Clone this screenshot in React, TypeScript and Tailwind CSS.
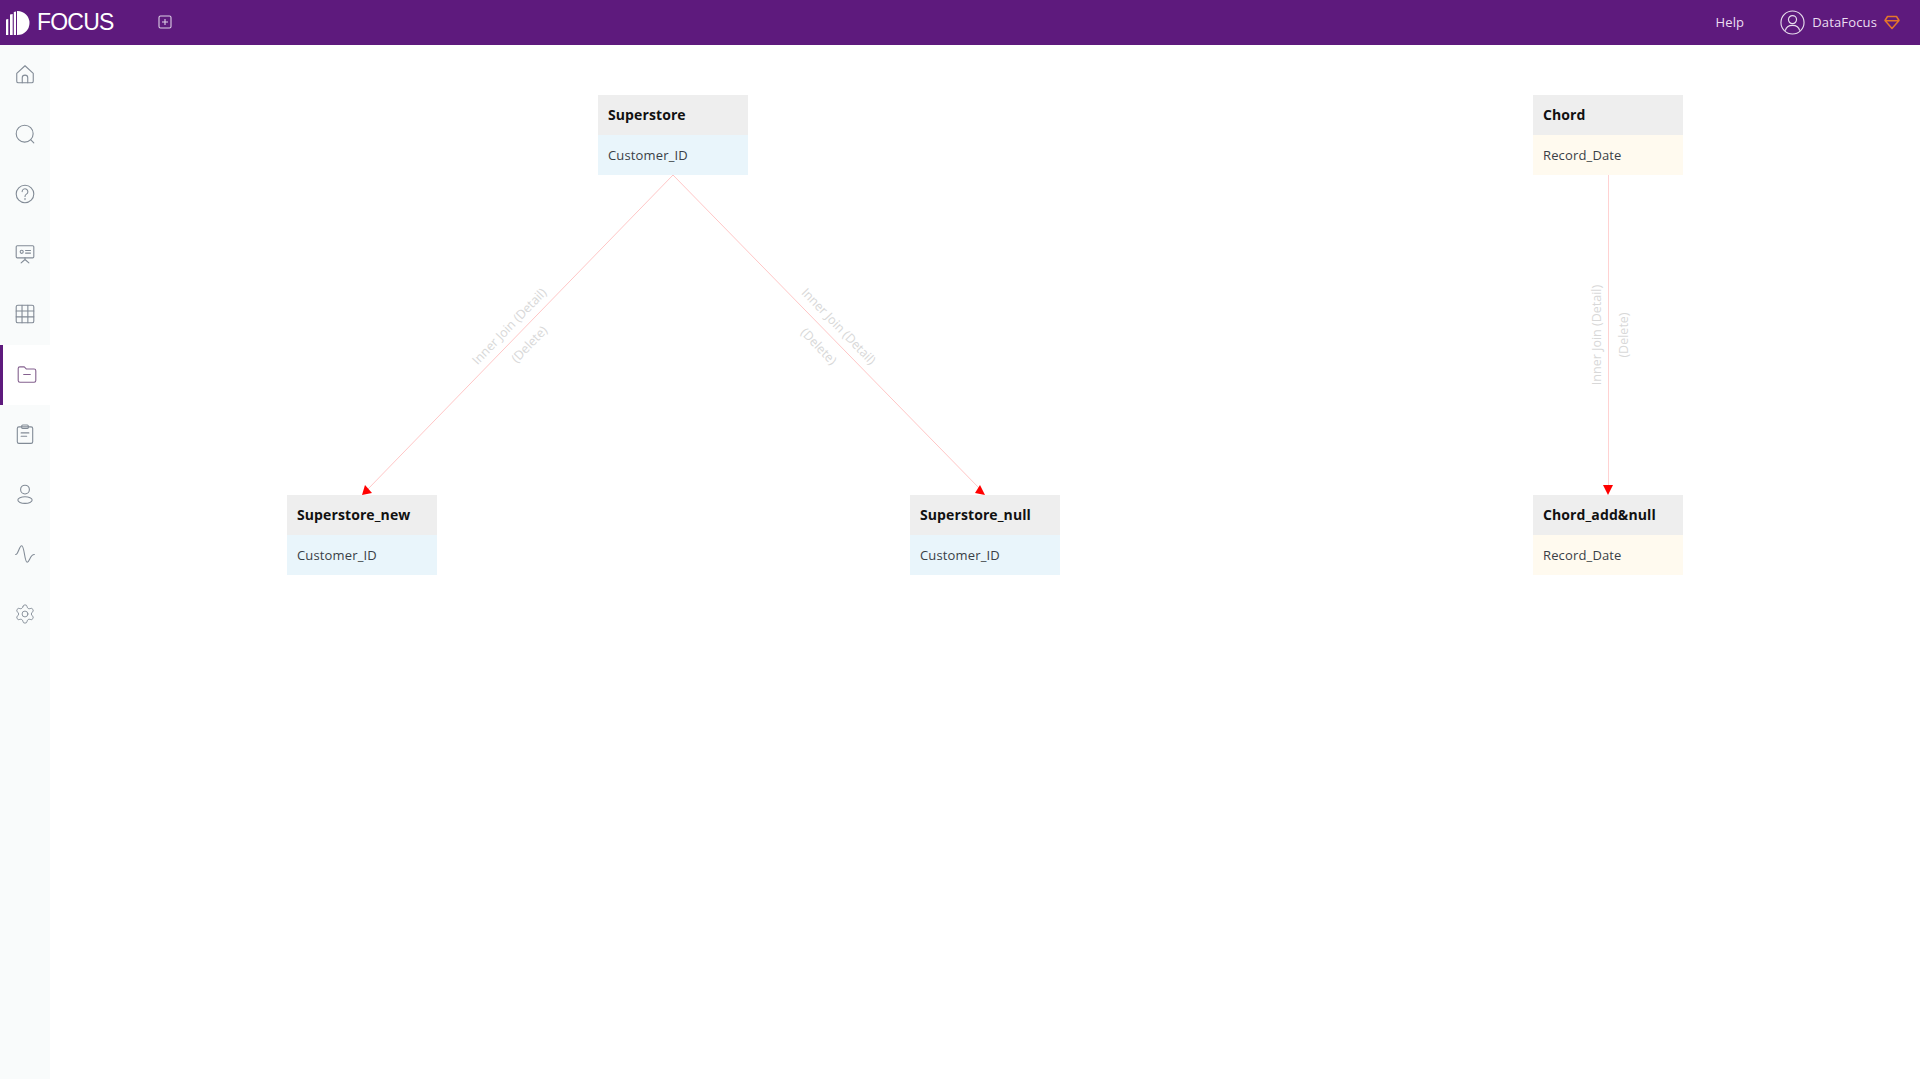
import React from 'react';

const FONT = '"Open Sans", "Noto Sans", sans-serif';

const navIcons: React.ReactNode[] = [
  // home
  <><path d="M2.500 9.500 10 2.500l7.500 7v7a1.500 1.500 0 0 1-1.500 1.500H4a1.500 1.500 0 0 1-1.500-1.500z" /><path d="M7.500 18v-4.500a2.500 2.500 0 0 1 5 0V18" /></>,
  // search
  <><circle cx="9.700" cy="9.700" r="7.700" /><path d="m15.300 15.300 2.700 2.700" /></>,
  // help
  <><circle cx="10" cy="10" r="8" /><path d="M7.400 7.800a2.600 2.600 0 1 1 3.900 2.300c-.9.500-1.300 1-1.300 2.100" /><path d="M10 14.200v.9" /></>,
  // presentation
  <><rect x="2" y="2.500" width="16" height="11" rx="1" /><circle cx="7" cy="8" r="1.400" /><path d="M10.500 6.800h4.500M10.500 9.200h4.500M10 13.500v1.500M10 15l-3.500 3M10 15l3.500 3" /></>,
  // table
  <><rect x="2" y="2" width="16" height="16" rx="1.500" /><path d="M2 7.300h16M2 12.600h16M7.300 2v16M12.600 2v16" /></>,
  // folder
  <><path d="M2 5a1.500 1.500 0 0 1 1.500-1.500h4l2 2h7A1.500 1.500 0 0 1 18 7v9a1.500 1.500 0 0 1-1.500 1.500h-13A1.500 1.500 0 0 1 2 16z" /><path d="M7 10.500h6" /></>,
  // clipboard
  <><rect x="3" y="3.500" width="14" height="15" rx="1.500" /><rect x="7" y="1.800" width="6" height="3.200" rx="1" /><path d="M6.500 9h7M6.500 12h5" /></>,
  // person
  <><circle cx="10" cy="6" r="4" /><ellipse cx="10" cy="15.500" rx="6.500" ry="3" /></>,
  // pulse
  <path d="M1.500 10.500C4 10.500 4.700 2.500 7 2.500c2.500 0 2.500 15 5 15 2.200 0 2.500-7 6.500-7" />,
  // gear
  <g transform="scale(0.833)">
    <path d="M9.671 4.136a2.340 2.340 0 0 1 4.659 0 2.340 2.340 0 0 0 3.319 1.915 2.340 2.340 0 0 1 2.330 4.033 2.340 2.340 0 0 0 0 3.831 2.340 2.340 0 0 1-2.330 4.033 2.340 2.340 0 0 0-3.319 1.915 2.340 2.340 0 0 1-4.659 0 2.340 2.340 0 0 0-3.320-1.915 2.340 2.340 0 0 1-2.330-4.033 2.340 2.340 0 0 0 0-3.831A2.340 2.340 0 0 1 6.350 6.051a2.340 2.340 0 0 0 3.320-1.915" />
    <circle cx="12" cy="12" r="3.200" />
  </g>,
];

function NavItem({ icon, active }: { icon: React.ReactNode; active?: boolean }) {
  return (
    <div className={active ? 'h-[60px] flex items-center justify-center bg-white border-l-[3px] border-[#5e1a7d] pl-[1px] pb-[2px]' : 'h-[60px] flex items-center justify-center pb-[2px]'}>
      <svg
        viewBox="0 0 20 20"
        fill="none"
        stroke={active ? '#84618f' : '#828b96'}
        strokeWidth="1"
        strokeLinecap="round"
        strokeLinejoin="round"
        className="w-[22px] h-[22px]"
      >
        {icon}
      </svg>
    </div>
  );
}

function TableNode({ name, field, kind, className }: { name: string; field: string; kind: 'blue' | 'cream'; className: string }) {
  return (
    <div className={'absolute w-[150px] ' + className}>
      <div className="h-10 flex items-center px-[10px] pb-[2px] bg-[#eeeeee] text-[14px] font-bold tracking-[0.1px] text-[#111111]">{name}</div>
      <div className={kind === 'blue' ? 'h-10 flex items-center px-[10px] pt-[1px] bg-[#e9f5fb] text-[13px] tracking-[0.15px] text-[#3a3f47]' : 'h-10 flex items-center px-[10px] pt-[1px] bg-[#fffaef] text-[13px] tracking-[0.15px] text-[#3a3f47]'}>{field}</div>
    </div>
  );
}

function EdgeLabel({ x, y, angle, children }: { x: number; y: number; angle: number; children: string }) {
  return (
    <text x={x} y={y} transform={`rotate(${angle} ${x} ${y})`} textAnchor="middle" dominantBaseline="middle" fontSize="12.500" fill="#d8d8d8" fontFamily={FONT}>
      {children}
    </text>
  );
}

export default function App() {
  return (
    <div className="h-screen flex flex-col bg-white overflow-hidden" style={{ fontFamily: FONT }}>
      <header className="h-[45px] shrink-0 bg-[#5e1a7d] flex items-center text-white">
        <svg viewBox="0 0 24 24" className="w-6 h-6 ml-[6px]" fill="#ffffff">
          <path d="M0 8.500 2.300 8v16H0zM4 3.500 6.700 3v21H4zM7.800 1 10 .5V24H7.800zM11 0h.5a12 12 0 0 1 0 24H11z" />
        </svg>
        <span className="ml-[7px] text-[23px] leading-none tracking-[-0.8px]" style={{ fontFamily: '"Liberation Sans", sans-serif' }}>FOCUS</span>
        <svg viewBox="0 0 14 14" fill="none" stroke="#dcd0e6" strokeWidth="1.100" className="w-[14px] h-[14px] ml-[44px] mb-[1px]">
          <rect x="1" y="1" width="12" height="12" rx="1.500" />
          <path d="M4 7h6M7 4v6" />
        </svg>
        <div className="ml-auto flex items-center pr-[20px]">
          <span className="text-[13px] tracking-[0.15px] text-[#ecdff2] mt-[1px]">Help</span>
          <svg viewBox="0 0 26 26" fill="none" stroke="#e6dcec" strokeWidth="1.200" className="w-[25px] h-[25px] ml-[36px]">
            <circle cx="13" cy="13" r="12" />
            <circle cx="13" cy="10" r="4.200" />
            <path d="M5.500 21.500c1-4.500 4-5.500 7.500-5.500s6.500 1 7.500 5.500" />
          </svg>
          <span className="ml-[7px] text-[13px] tracking-[0.15px] text-[#ecdff2] mt-[1px]">DataFocus</span>
          <svg viewBox="0 0 16 14" fill="none" stroke="#e5762a" strokeWidth="1.500" strokeLinejoin="round" className="w-4 h-[15px] ml-[7px]">
            <path d="M3.500 1h9L15 5l-7 8-7-8zM1 5.200h14" />
          </svg>
        </div>
      </header>
      <div className="flex-1 flex min-h-0">
        <nav className="w-[50px] shrink-0 bg-[#f9fbfb]">
          {navIcons.map((icon, i) => (
            <NavItem key={i} icon={icon} active={i === 5} />
          ))}
        </nav>
        <main className="flex-1 relative">
          <svg className="absolute inset-0 w-full h-full" fill="none">
            <path d="M623 130 318 444" stroke="#ffc6c6" />
            <path d="M623 130 930 444" stroke="#ffc6c6" />
            <path d="M1558.500 130V440" stroke="#ffd2d2" />
            <path d="m312 450 3-10 7 8z" fill="#ff0000" />
            <path d="m935 450-5-10-5 8z" fill="#ff0000" />
            <path d="M1553 440h10l-5 10z" fill="#ff0000" />
            <EdgeLabel x={460} y={282} angle={-46}>Inner Join (Detail)</EdgeLabel>
            <EdgeLabel x={480} y={300} angle={-46}>(Delete)</EdgeLabel>
            <EdgeLabel x={788} y={282} angle={46}>Inner Join (Detail)</EdgeLabel>
            <EdgeLabel x={768} y={302} angle={46}>(Delete)</EdgeLabel>
            <EdgeLabel x={1548} y={290} angle={-90}>Inner Join (Detail)</EdgeLabel>
            <EdgeLabel x={1575} y={290} angle={-90}>(Delete)</EdgeLabel>
          </svg>
          <TableNode name="Superstore" field="Customer_ID" kind="blue" className="left-[548px] top-[50px]" />
          <TableNode name="Superstore_new" field="Customer_ID" kind="blue" className="left-[237px] top-[450px]" />
          <TableNode name="Superstore_null" field="Customer_ID" kind="blue" className="left-[860px] top-[450px]" />
          <TableNode name="Chord" field="Record_Date" kind="cream" className="left-[1483px] top-[50px]" />
          <TableNode name="Chord_add&null" field="Record_Date" kind="cream" className="left-[1483px] top-[450px]" />
        </main>
      </div>
    </div>
  );
}
